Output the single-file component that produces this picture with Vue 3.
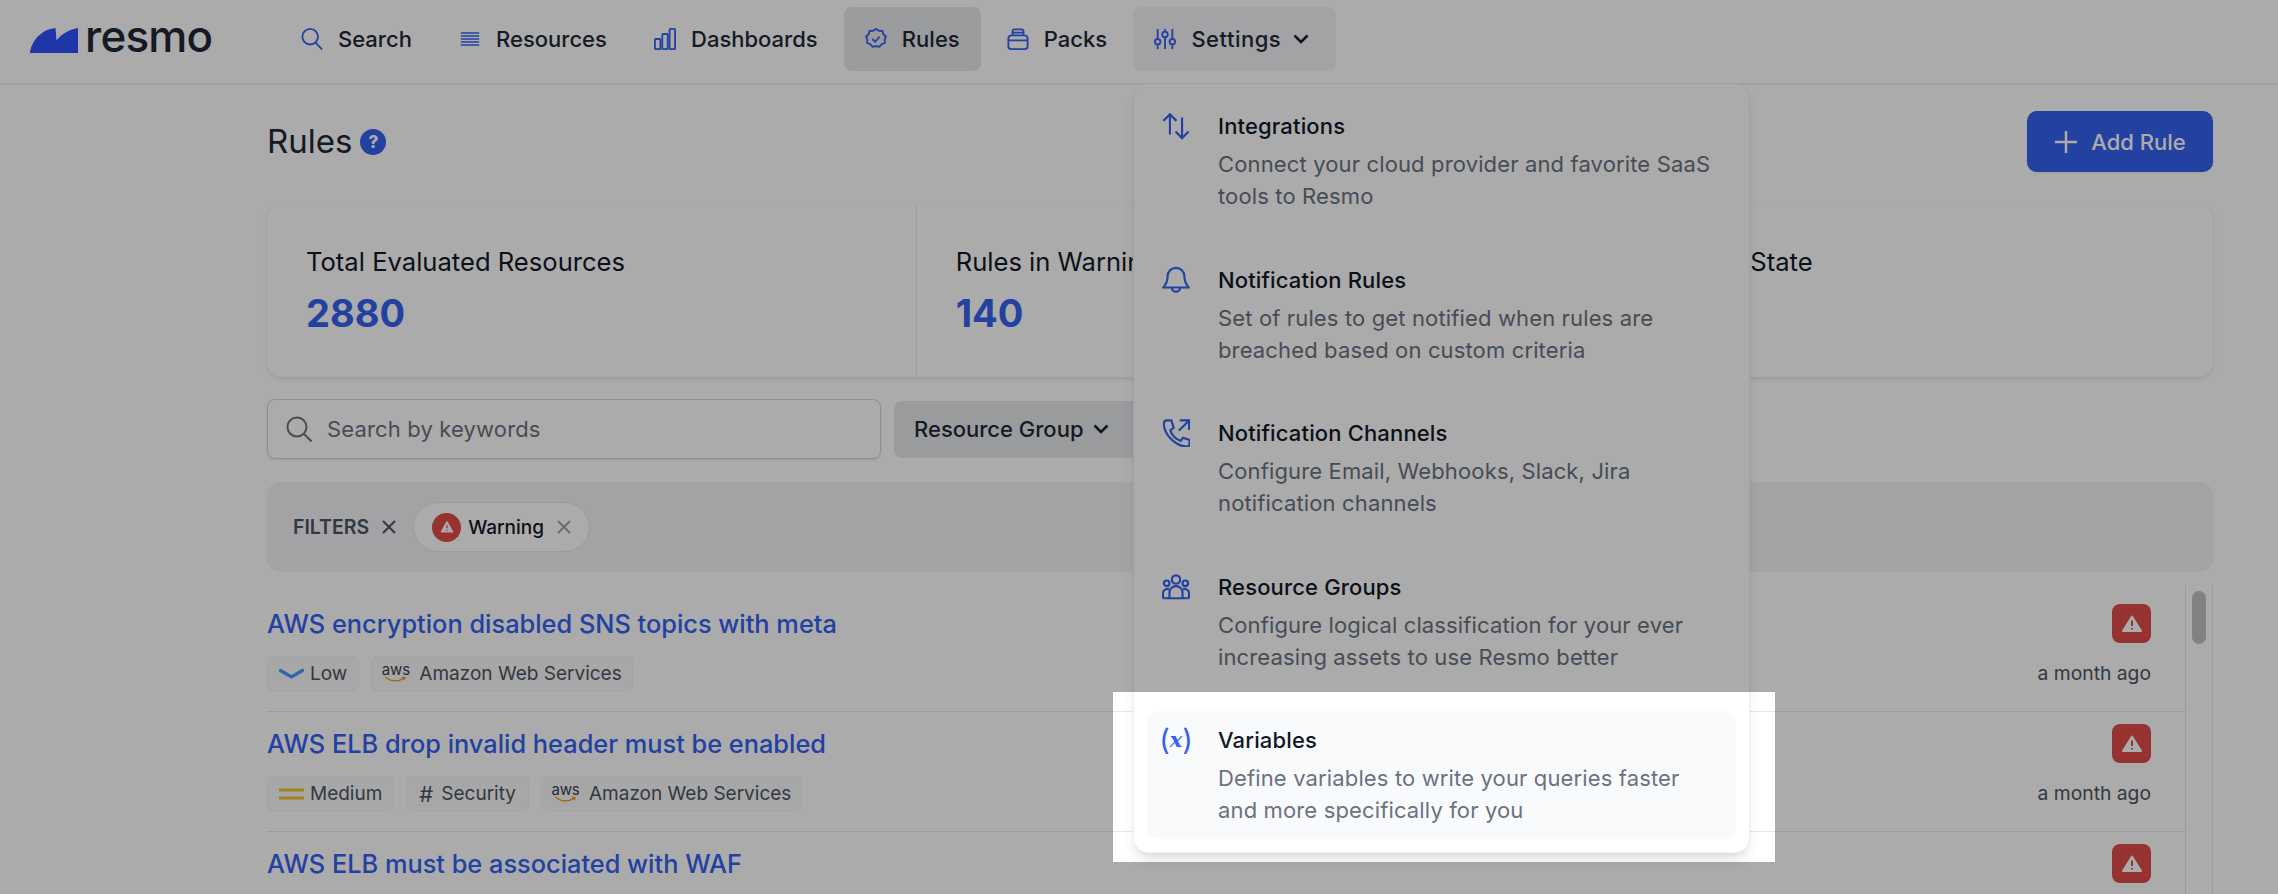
<script setup>
const nav = [
  { label: 'Search', icon: 'search' },
  { label: 'Resources', icon: 'lines' },
  { label: 'Dashboards', icon: 'bars' },
  { label: 'Rules', icon: 'badge', active: true },
  { label: 'Packs', icon: 'pack' },
]
const stats = [
  { label: 'Total Evaluated Resources', value: '2880' },
  { label: 'Rules in Warning State', value: '140' },
  { label: 'Rules in OK State', value: '212' },
]
const rows = [
  { title: 'AWS encryption disabled SNS topics with meta', level: 'Low', security: false, meta: true },
  { title: 'AWS ELB drop invalid header must be enabled', level: 'Medium', security: true, meta: true },
  { title: 'AWS ELB must be associated with WAF', meta: false },
]
const menu = [
  { title: 'Integrations', desc: 'Connect your cloud provider and favorite SaaS tools to Resmo', icon: 'arrows' },
  { title: 'Notification Rules', desc: 'Set of rules to get notified when rules are breached based on custom criteria', icon: 'bell' },
  { title: 'Notification Channels', desc: 'Configure Email, Webhooks, Slack, Jira notification channels', icon: 'phone' },
  { title: 'Resource Groups', desc: 'Configure logical classification for your ever increasing assets to use Resmo better', icon: 'group' },
  { title: 'Variables', desc: 'Define variables to write your queries faster and more specifically for you', icon: 'var', active: true },
]
</script>

<template>
  <div class="page">
    <header class="topbar">
      <div class="logo">
        <svg class="logo-mark" viewBox="0 0 48 25" width="48" height="25">
          <path d="M0 25C1.500 13 11 1.500 25.500 0L26.500 12.500C31 6.500 39 1.500 48 0V25Z" fill="#2e51fb" />
        </svg>
        <span class="logo-text">resmo</span>
      </div>
      <nav class="nav">
        <a v-for="item in nav" :key="item.label" class="nav-item" :class="{ active: item.active }">
          <svg class="ico" viewBox="0 0 24 24">
            <template v-if="item.icon === 'search'"><circle cx="10" cy="9.500" r="8.500" /><path d="M16 16l7 7.500" /></template>
            <template v-else-if="item.icon === 'lines'"><path class="thin" d="M2 5.500h20M2 8.800h20M2 12h20M2 15.200h20M2 18.500h20" /></template>
            <template v-else-if="item.icon === 'bars'"><rect x="1" y="12" width="6" height="11" rx="1" /><rect x="9" y="6.500" width="6" height="16.500" rx="1" /><rect x="17" y="1" width="6" height="22" rx="1" /></template>
            <template v-else-if="item.icon === 'badge'"><path d="M12 1l3.300 2 3.800.3.900 3.400 2.800 2.600-1.300 3.200.1 3.700-3.400 1.500-2.500 2.800-3.700-.8-3.700.8-2.500-2.800-3.400-1.500.1-3.700L1.200 9.300 4 6.700l.9-3.400 3.800-.3z" /><path d="M8 12l3 3 5-5.500" /></template>
            <template v-else><path d="M6 8V4a2.500 2.500 0 012.500-2.500h7A2.500 2.500 0 0118 4v4M1.500 11.500A3.500 3.500 0 015 8h14a3.500 3.500 0 013.500 3.500V20a3 3 0 01-3 3h-15a3 3 0 01-3-3zM1.500 13.500h21M6 5h12" /></template>
          </svg>
          <span>{{ item.label }}</span>
        </a>
        <a class="nav-item open">
          <svg class="ico" viewBox="0 0 24 24"><path d="M4 1v10M4 19v4M12 1v2M12 11v12M20 1v10M20 19v4" /><circle cx="4" cy="15" r="3" /><circle cx="12" cy="7" r="3" /><circle cx="20" cy="15" r="3" /></svg>
          <span class="settings-label">Settings</span>
          <svg class="chev" viewBox="0 0 16 16"><path d="M1.500 4.500L8 11l6.500-6.500" /></svg>
        </a>
      </nav>
    </header>

    <main class="main">
      <div class="title-row">
        <h1 class="title">Rules</h1>
        <span class="help">?</span>
        <button class="add-btn">
          <svg class="plus" viewBox="0 0 24 24"><path d="M12 1v22M1 12h22" /></svg>
          Add Rule
        </button>
      </div>

      <section class="stats">
        <div v-for="s in stats" :key="s.label" class="stat">
          <div class="stat-label">{{ s.label }}</div>
          <div class="stat-value">{{ s.value }}</div>
        </div>
      </section>

      <div class="tools">
        <div class="search">
          <svg class="search-ico" viewBox="0 0 26 26"><circle cx="11" cy="11" r="9.500" /><path d="M18 18l7.500 7.500" /></svg>
          <span>Search by keywords</span>
        </div>
        <div class="select">Resource Group
          <svg class="chev small" viewBox="0 0 16 16"><path d="M1.500 4.500L8 11l6.500-6.500" /></svg>
        </div>
      </div>

      <div class="filters">
        <span class="filters-label">FILTERS</span>
        <svg class="x" viewBox="0 0 14 14"><path d="M1 1l12 12M13 1L1 13" /></svg>
        <span class="chip">
          <span class="chip-ico">
            <svg viewBox="0 0 16 16" width="14" height="14"><path d="M8 2l6.500 11.500h-13z" fill="#fff" stroke="#fff" stroke-width="1.500" stroke-linejoin="round" /><path d="M8 6v3.500M8 11v1.200" stroke="#e04c48" stroke-width="1.500" /></svg>
          </span>
          Warning
          <svg class="x light" viewBox="0 0 14 14"><path d="M1 1l12 12M13 1L1 13" /></svg>
        </span>
      </div>

      <div class="list-wrap">
        <div class="list">
          <article v-for="r in rows" :key="r.title" class="row">
            <div class="row-left">
              <a class="row-title">{{ r.title }}</a>
              <div v-if="r.meta" class="tags">
                <span class="tag">
                  <svg v-if="r.level === 'Low'" class="lvl" viewBox="0 0 25 14"><path d="M1.500 3.500l11 6.500 11-6.500" fill="none" stroke="#3f98ff" stroke-width="3.200" stroke-linecap="round" /></svg>
                  <svg v-else class="lvl" viewBox="0 0 25 14"><path d="M0 3h25M0 11h25" fill="none" stroke="#f5c030" stroke-width="3.200" /></svg>
                  {{ r.level }}
                </span>
                <span v-if="r.security" class="tag sec"><span class="hash">#</span>Security</span>
                <span class="tag aws">
                  <span class="aws-logo">
                    <span class="aws-word">aws</span>
                    <svg viewBox="0 0 25 8" width="25" height="7"><path d="M1 1c6 6 15 6 22 1M23.500 1.500l-3.500 .2M23.500 1.500l-1 3" fill="none" stroke="#f29111" stroke-width="1.500" /></svg>
                  </span>
                  Amazon Web Services
                </span>
              </div>
            </div>
            <div class="row-right">
              <span class="warn">
                <svg viewBox="0 0 20 18" width="20" height="18"><path d="M10 1.500L19 16H1z" fill="#fff" stroke="#fff" stroke-width="2" stroke-linejoin="round" /><path d="M10 5.500v5.500M10 13v1.500" stroke="#e04c48" stroke-width="2" /></svg>
              </span>
              <span v-if="r.meta" class="ago">a month ago</span>
            </div>
          </article>
        </div>
        <div class="scroll"><div class="thumb"></div></div>
      </div>
    </main>

    <div class="dropdown">
      <div v-for="m in menu" :key="m.title" class="menu-item" :class="{ active: m.active }">
        <svg v-if="m.icon !== 'var'" class="menu-ico" viewBox="0 0 30 30">
          <template v-if="m.icon === 'arrows'"><path d="M8.500 24V2.500M1.500 9.500l7-7 7 7M21.500 6v22M14.500 21l7 7 7-7" /></template>
          <template v-else-if="m.icon === 'bell'"><path d="M15 2a9 9 0 00-9 9c0 8-3.500 10-4.500 12h27c-1-2-4.500-4-4.500-12a9 9 0 00-9-9zM10.500 23a4.500 4.500 0 009 0" /></template>
          <template v-else-if="m.icon === 'phone'"><path d="M19 1.500h10v10M29 1.500l-11 11M2 5c0-2 1.500-3.500 3.500-3.500H10l2.500 8-3.500 2.500c1 5 6 10 11 11.500l2.500-3.500 7 2.500v4.500c0 1.500-1.500 2.500-3.500 2.500C14 29 2 16 2 5z" /></template>
          <template v-else><circle cx="15" cy="7" r="4.500" /><circle cx="5" cy="11" r="3" /><circle cx="25" cy="11" r="3" /><path d="M1 27v-5a5 5 0 015-5h1.500M29 27v-5a5 5 0 00-5-5h-1.500M1 27h28M8 27v-6a7 7 0 0114 0v6" /></template>
        </svg>
        <span v-else class="var-ico"><span class="paren">(</span><i>x</i><span class="paren">)</span></span>
        <div class="menu-text">
          <div class="menu-title">{{ m.title }}</div>
          <div class="menu-desc">{{ m.desc }}</div>
        </div>
      </div>
    </div>

    <div class="spotlight"></div>
  </div>
</template>

<style>
html, body { margin: 0; height: 100%; overflow: hidden; background: #fff; }
</style>

<style scoped>
.page {
  position: relative;
  width: 2278px;
  height: 894px;
  overflow: hidden;
  background: #fff;
  font-family: Inter, "Liberation Sans", sans-serif;
  color: #111827;
}
.topbar {
  height: 84px;
  display: flex;
  align-items: flex-start;
  box-sizing: border-box;
  padding: 7px 0 0 30px;
  border-bottom: 1px solid #e5e7eb;
  box-shadow: 0 1px 2px rgba(0,0,0,.06);
}
.logo { width: 250px; display: flex; align-items: center; height: 64px; gap: 7px; }
.logo-mark { display: block; margin-top: 2px; flex: none; }
.logo-text { font-size: 44px; font-weight: 500; color: #1f2937; letter-spacing: -.8px; line-height: 1; margin-top: -6px; }
.nav { display: flex; gap: 5.200px; }
.nav-item {
  height: 64px;
  display: flex;
  align-items: center;
  gap: 15px;
  padding: 0 21px;
  border-radius: 8px;
  font-size: 22px;
  font-weight: 500;
  color: #1f2937;
}
.nav-item.active { background: #e5e7eb; }
.nav-item.open { background: #f3f4f6; padding-right: 27px; gap: 15px; }
.settings-label { letter-spacing: .5px; }
.ico { width: 22px; height: 22px; fill: none; stroke: #3361f0; stroke-width: 2; flex: none; }
.ico .thin { stroke-width: 1.700; }
.chev { width: 16px; height: 16px; fill: none; stroke: #111827; stroke-width: 2.500; margin-left: -3px; }
.main { padding: 0 65px 0 267px; }
.title-row { display: flex; align-items: center; height: 120px; box-sizing: border-box; padding-bottom: 5px; }
.title { margin: 0; font-size: 33px; font-weight: 400; color: #1f2937; line-height: 1; }
.help {
  width: 26px; height: 26px; margin-left: 8px; border-radius: 50%;
  background: #3361f0; color: #fff; font-size: 17px; font-weight: 800;
  display: flex; align-items: center; justify-content: center;
}
.add-btn {
  margin-left: auto; height: 61px; width: 186px; border: 0; border-radius: 10px;
  background: #3361f0; color: #fff; font: 500 22px Inter, sans-serif;
  display: flex; align-items: center; justify-content: center; gap: 13px;
  box-shadow: 0 1px 2px rgba(0,0,0,.08);
}
.plus { width: 24px; height: 24px; fill: none; stroke: #fff; stroke-width: 2.500; }
.stats {
  display: grid; grid-template-columns: repeat(3, 1fr);
  height: 173px; border-radius: 14px;
  box-shadow: 0 2px 5px rgba(0,0,0,.09), 0 0 2px rgba(0,0,0,.04);
}
.stat { padding: 38px 38px 0 39px; box-sizing: border-box; border-left: 1px solid #e5e7eb; }
.stat:first-child { border-left: 0; }
.stat-label { font-size: 25.600px; line-height: 40px; color: #111827; }
.stat-value { font-size: 38px; font-weight: 700; line-height: 52px; color: #3361f0; margin-top: 5px; }
.tools { display: flex; gap: 13px; align-items: center; margin-top: 22px; }
.search {
  width: 614px; height: 60px; box-sizing: border-box; border: 1px solid #d1d5db; border-radius: 8px;
  box-shadow: 0 1px 2px rgba(0,0,0,.1); display: flex; align-items: center; padding-left: 18px; gap: 15px;
  color: #6b7280; font-size: 22px; letter-spacing: .15px;
}
.search-ico { width: 26px; height: 26px; fill: none; stroke: #6b7280; stroke-width: 2; }
.select {
  width: 260px; height: 57px; background: #e5e7eb; border-radius: 8px; display: flex; align-items: center;
  box-sizing: border-box; padding-left: 20px; gap: 9px; font-size: 22px; font-weight: 500; color: #1f2937;
}
.chev.small { margin-left: 1px; }
.filters {
  margin-top: 23px; height: 90px; box-sizing: border-box; background: #f3f4f6; border-radius: 14px;
  display: flex; align-items: center; padding-left: 26px;
}
.filters-label { font-size: 19.500px; font-weight: 600; color: #4b5563; }
.x { width: 14px; height: 14px; fill: none; stroke: #4b5563; stroke-width: 2; margin-left: 13px; }
.x.light { stroke: #9ca3af; margin-left: 13px; }
.chip {
  margin-left: 17px; height: 50px; width: 177px; box-sizing: border-box; border: 1px solid #e5e7eb; border-radius: 25px;
  background: #fff; display: flex; align-items: center; padding-left: 18px; font-size: 19px; font-weight: 500; color: #111827;
}
.chip-ico {
  width: 29px; height: 29px; border-radius: 50%; background: #e04c48; margin-right: 7px;
  display: flex; align-items: center; justify-content: center;
}
.list-wrap { display: flex; margin-top: 13px; height: 309px; }
.list { flex: 1; min-width: 0; padding-top: 7px; }
.scroll { width: 28px; box-sizing: border-box; border-left: 1px solid #e5e7eb; border-right: 1px solid #e5e7eb; padding: 6px 6px 0; }
.thumb { height: 53px; background: #c2c2c2; border-radius: 8px; }
.row { height: 120px; box-sizing: border-box; border-bottom: 1px solid #e5e7eb; display: flex; justify-content: space-between; }
.row-left { padding-top: 14px; }
.row-title { display: block; font-size: 25.350px; line-height: 36px; font-weight: 500; color: #3361f0; }
.tags { display: flex; gap: 12px; margin-top: 14px; }
.tag {
  height: 35px; box-sizing: border-box; display: flex; align-items: center; gap: 6px; padding: 0 11px;
  background: #f9fafb; border: 1px solid #f3f4f6; border-radius: 6px; color: #4b5563; font-size: 19px;
}
.lvl { width: 25px; height: 14px; }
.hash { font-size: 22px; }
.sec { gap: 8px; padding: 0 12px; }
.aws { gap: 11px; padding-right: 10px; }
.aws-logo { display: flex; flex-direction: column; align-items: center; width: 25px; line-height: 1; }
.aws-word { font-size: 15px; color: #374151; line-height: 12px; letter-spacing: -.2px; }
.row-right { padding: 12px 34px 0 0; display: flex; flex-direction: column; align-items: flex-end; gap: 12px; }
.warn { width: 39px; height: 39px; border-radius: 8px; background: #e04c48; display: flex; align-items: center; justify-content: center; }
.ago { font-size: 19.300px; line-height: 36px; color: #4b5563; }
.dropdown {
  position: absolute; left: 1134px; top: 84px; width: 615px; height: 768px; box-sizing: border-box; padding: 13px;
  background: #fff; border-radius: 14px; display: flex; flex-direction: column; gap: 25.500px;
  box-shadow: 0 0 0 1px #f0f1f3, 0 10px 15px -3px rgba(0,0,0,.12), 0 4px 6px -2px rgba(0,0,0,.06);
}
.menu-item { height: 128px; box-sizing: border-box; padding: 13px 24px 0 15px; border-radius: 12px; display: flex; gap: 28px; flex: none; }
.menu-item.active { background: #f9fafb; }
.menu-ico { width: 28px; height: 28px; flex: none; fill: none; stroke: #3361f0; stroke-width: 2.300; margin-top: 2px; }
.var-ico { width: 28px; flex: none; text-align: center; color: #3361f0; line-height: 32px; white-space: nowrap; display: flex; align-items: center; justify-content: center; height: 32px; }
.paren { font-size: 29px; font-weight: 400; }
.var-ico i { font-family: "DejaVu Serif", serif; font-weight: 700; font-size: 21px; margin: 0; }
.menu-title { font-size: 22px; line-height: 32px; font-weight: 500; color: #111827; letter-spacing: .15px; }
.menu-desc { font-size: 22px; line-height: 32px; color: #6b7280; margin-top: 6px; letter-spacing: .14px; }
.spotlight {
  position: absolute; left: 1113px; top: 692px; width: 662px; height: 170px;
  box-shadow: 0 0 0 3000px rgba(0,0,0,.33);
}
</style>
